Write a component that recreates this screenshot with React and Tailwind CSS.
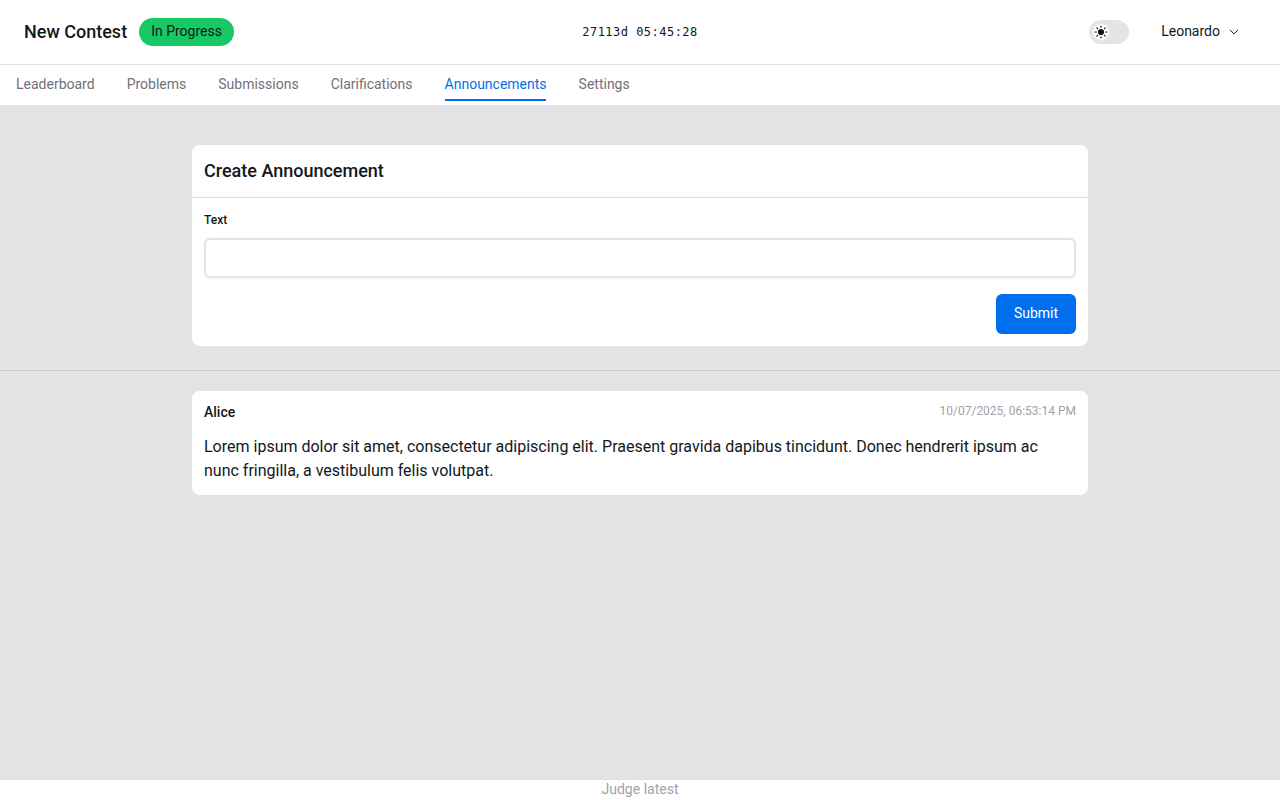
import React from "react";

const tabs = ["Leaderboard", "Problems", "Submissions", "Clarifications", "Announcements", "Settings"];

function SunIcon() {
  return (
    <svg width="14" height="14" viewBox="0 0 14 14" fill="currentColor" stroke="currentColor" strokeLinecap="round" aria-hidden="true">
      <circle cx="7" cy="7" r="3.1" stroke="none" />
      <path strokeWidth="1.2" d="M7 1v1.2M7 11.8v1.2M1 7h1.2M11.8 7h1.2M2.8 2.8l.8.8M10.4 10.4l.8.8M2.8 11.2l.8-.8M10.4 3.6l.8-.8" />
    </svg>
  );
}

function Header() {
  return (
    <header className="grid h-16 shrink-0 grid-cols-3 items-center bg-white px-6">
      <div className="flex items-center gap-3">
        <h1 className="text-lg font-medium leading-7">New Contest</h1>
        <span className="h-7 rounded-full bg-[#17c964] px-3 text-sm leading-[27px]">In Progress</span>
      </div>
      <div className="text-center font-['DejaVu_Sans_Mono',monospace] text-xs tracking-[0.475px]">27113d 05:45:28</div>
      <div className="flex items-center justify-end gap-4">
        <button className="flex h-6 w-10 items-center rounded-full bg-[#e4e4e7] px-1">
          <span className="flex size-4 items-center justify-center rounded-full bg-white">
            <SunIcon />
          </span>
        </button>
        <button className="flex h-10 items-center gap-2 px-4 text-sm">
          <span className="pb-0.5">Leonardo</span>
          <svg width="12" height="12" viewBox="0 0 24 24" fill="none" stroke="currentColor" strokeWidth="2" strokeLinecap="round" strokeLinejoin="round">
            <path d="m4.5 8.25 7.5 7.5 7.5-7.5" />
          </svg>
        </button>
      </div>
    </header>
  );
}

export default function App() {
  return (
    <div className="flex h-screen flex-col bg-[#e4e4e6] font-[Roboto,sans-serif] text-[#11181c]">
      <Header />
      <nav className="flex h-[41px] shrink-0 gap-8 border-t border-[#dedee0] bg-white px-4 text-sm">
        {tabs.map((t) => (
          <a
            key={t}
            className={
              t === "Announcements"
                ? "-mr-px h-9 pt-[9px] leading-5 text-[#006fee] after:mt-[5px] after:mr-px after:block after:h-0.5 after:bg-[#006fee]"
                : "h-9 pt-[9px] leading-5 text-[#71717a] last:pl-px"
            }
          >
            {t}
          </a>
        ))}
      </nav>
      <main className="flex-1">
        <section className="mx-auto mt-10 h-[201px] w-[896px] rounded-lg bg-white">
          <h2 className="h-[53px] border-b border-[#dedee0] px-3 pt-3 text-lg font-medium leading-7">Create Announcement</h2>
          <form className="flex flex-col px-3 pt-3">
            <label htmlFor="text" className="text-xs font-medium leading-5">Text</label>
            <input id="text" className="mt-2 h-10 rounded-md border-2 border-[#e4e4e7] bg-white px-3 shadow-xs" />
            <button type="button" className="mt-4 h-10 w-20 self-end rounded-md bg-[#006fee] pb-0.5 text-sm text-white">Submit</button>
          </form>
        </section>
        <hr className="mt-6 border-[#c8c8cb]" />
        <article className="mx-auto mt-5 h-[104px] w-[896px] rounded-lg bg-white px-3 pt-3">
          <div className="flex h-5 justify-between">
            <span className="text-sm font-medium leading-[18px]">Alice</span>
            <time className="text-xs text-[#a1a1aa]">10/07/2025, 06:53:14 PM</time>
          </div>
          <p className="mt-3 text-base leading-6">
            Lorem ipsum dolor sit amet, consectetur adipiscing elit. Praesent gravida dapibus tincidunt. Donec hendrerit ipsum ac nunc fringilla, a vestibulum felis volutpat.
          </p>
        </article>
      </main>
      <footer className="h-[21px] shrink-0 border-t border-[#dedee0] bg-white text-center text-sm leading-[18px] text-[#a1a1aa]">Judge latest</footer>
    </div>
  );
}
